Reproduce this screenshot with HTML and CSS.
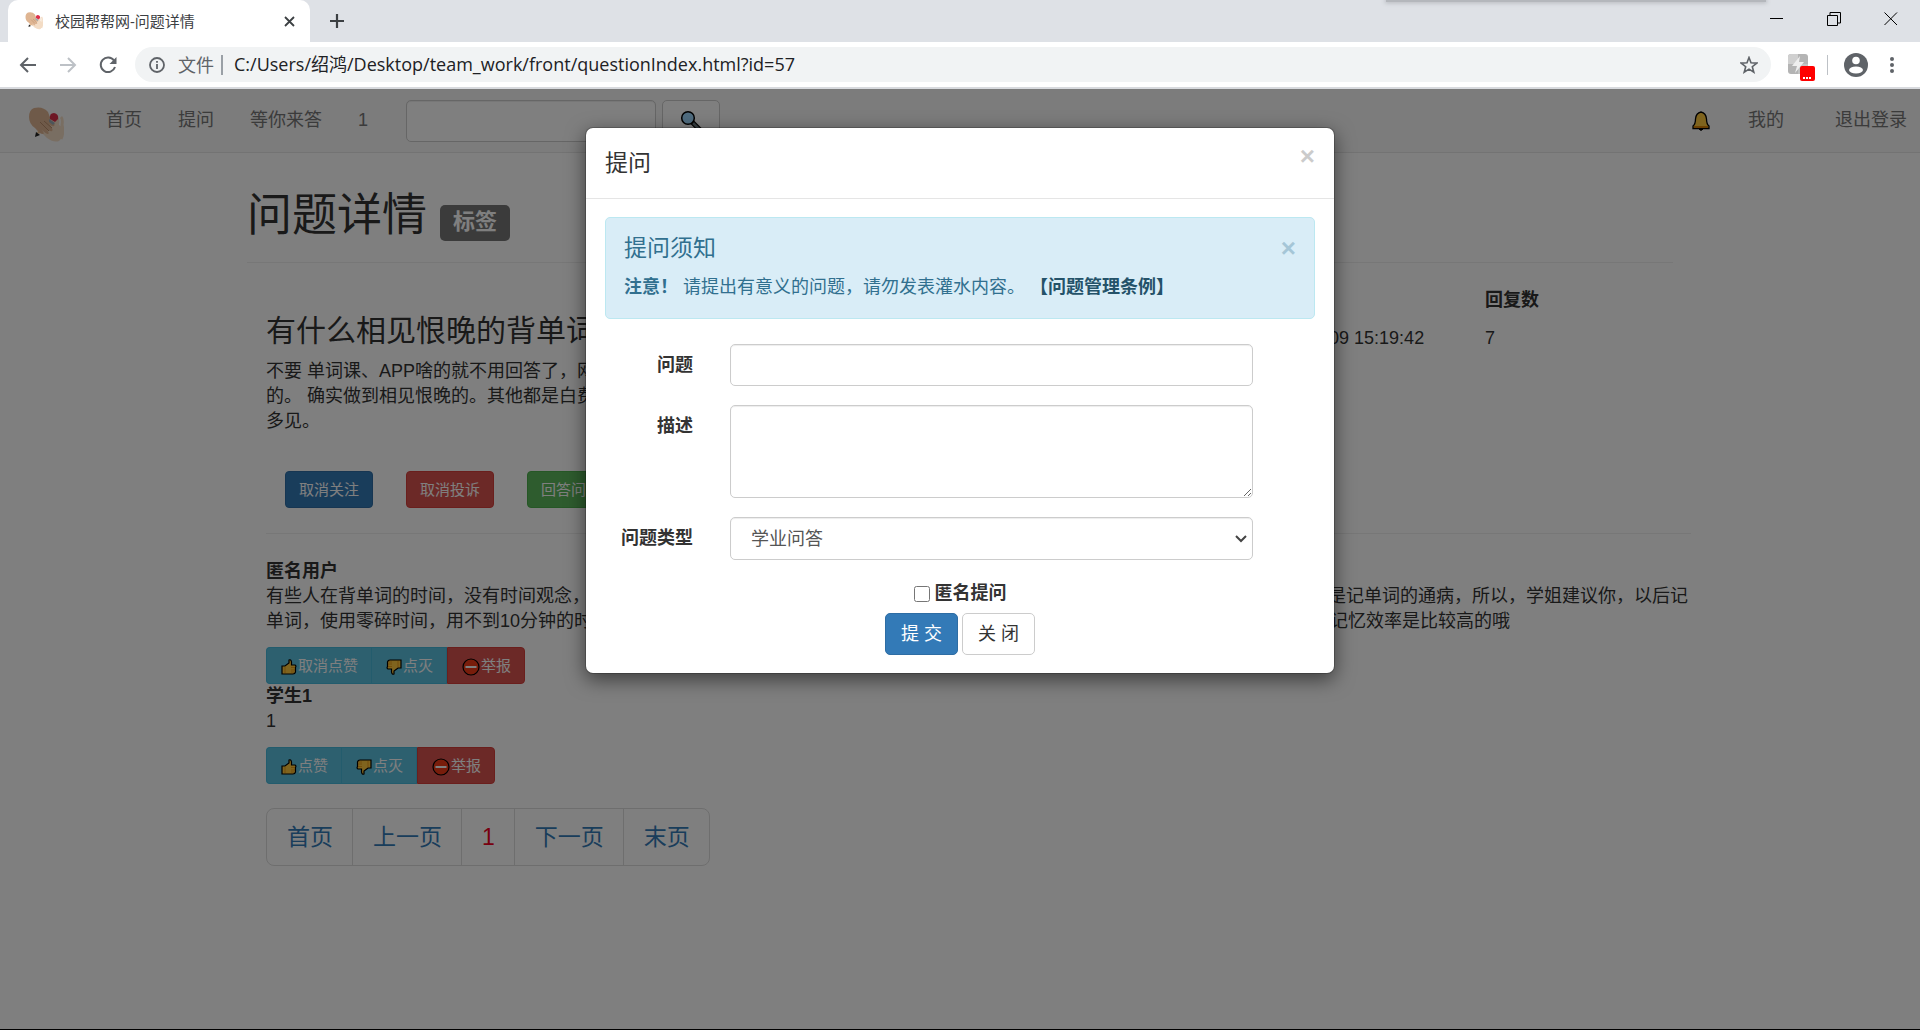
FILE: index.html
```html
<!DOCTYPE html>
<html lang="zh-CN">
<head>
<meta charset="utf-8">
<meta name="viewport" content="width=device-width, initial-scale=1">
<title>校园帮帮网-问题详情</title>
<link rel="stylesheet" href="styles.css">
</head>
<body>
<svg class="sprite" aria-hidden="true">
  <symbol id="logo" viewBox="0 0 36 36">
    <path d="M22 15 L30 10 Q32 11 31 18 L34 20 Q36 30 31 34 Q26 36 19 31 L12 24Z" fill="#f3dcc5"/>
    <path d="M33 10 Q35 12 34 18 Q36 25 33 32" fill="none" stroke="#f3dcc5" stroke-width="3"/>
    <path d="M8 27 L11 23 L14 26Z" fill="#f2c58e"/>
    <path d="M8 25 L12 28 L7 30Z" fill="#222"/>
    <path d="M1 10 Q1 3 6 1 Q15 -1 20 5 L23 13 Q28 17 26 19 Q24 20 21 17 Q26 23 24 24 Q22 25 18 21 Q22 26 20 27 Q18 27 14 23 Q17 27 15 27 Q12 27 7 21 Q1 17 1 10Z" fill="#dfb592"/>
    <path d="M12 15 L21 24 M16 14 L24 21" stroke="#b98d6b" stroke-width="1" fill="none"/>
    <path d="M22 12 Q21 6 26 6 Q31 7 30 12 L27 15Z" fill="#dd2e4a"/>
    <path d="M21 12 L27 16 L25 18 L21 15Z" fill="#99aab5"/>
  </symbol>
  <symbol id="thumb" viewBox="0 0 16 16">
    <path d="M1 7 H4 L8 4 V1 Q10 0 10.500 3 V6 H14 Q15.500 7 14.500 8.500 V13 Q14 15 12 15 H1Z" fill="#ffc83d" stroke="#000" stroke-width="1.2"/>
    <path d="M10 8.500H14 M10 11H14 M10 13H13 M4 8V14" stroke="#d67d00" stroke-width=".6"/>
  </symbol>
  <symbol id="stop" viewBox="0 0 18 18">
    <circle cx="9" cy="9" r="8" fill="#f03a17" stroke="#000" stroke-width="1.2"/>
    <path d="M3.500 9H14.500" stroke="#fff" stroke-width="2"/>
  </symbol>
</svg>
<header class="browser">
  <div class="tabs">
    <div class="tab">
      <svg class="favicon"><use href="#logo"/></svg>
      <span class="tab-title">校园帮帮网-问题详情</span>
      <button class="plain" aria-label="关闭标签页"><svg width="11" height="11" viewBox="0 0 11 11"><path d="M1 1L10 10M10 1L1 10" stroke="#3c4043" stroke-width="1.800"/></svg></button>
    </div>
    <button class="plain newtab" aria-label="新标签页"><svg width="14" height="14" viewBox="0 0 14 14"><path d="M7 0V14M0 7H14" stroke="#3c4043" stroke-width="2.200"/></svg></button>
    <div class="window-buttons">
      <button class="plain" aria-label="最小化"><svg width="14" height="14"><path d="M0 6.500H13" stroke="#000"/></svg></button>
      <button class="plain" aria-label="还原"><svg width="14" height="14"><path d="M.5 3.500H10.500V13.500H.5ZM3 3V.5H13.500V11H11" fill="none" stroke="#000"/></svg></button>
      <button class="plain" aria-label="关闭"><svg width="14" height="14"><path d="M.5 .5L13 13M13 .5L.5 13" stroke="#000"/></svg></button>
    </div>
    <div class="drag-hint"></div>
  </div>
  <div class="toolbar">
    <button class="plain" aria-label="后退"><svg width="18" height="16" viewBox="0 0 18 16"><path d="M17 8H2M9 1L2 8L9 15" fill="none" stroke="#5f6368" stroke-width="2"/></svg></button>
    <button class="plain" aria-label="前进"><svg width="18" height="16" viewBox="0 0 18 16"><path d="M1 8H16M9 1L16 8L9 15" fill="none" stroke="#bdc1c6" stroke-width="2"/></svg></button>
    <button class="plain" aria-label="刷新"><svg width="18" height="18" viewBox="0 0 18 18"><path d="M15 4.500A7.300 7.300 0 1 0 16 11" fill="none" stroke="#5f6368" stroke-width="2"/><path d="M17.500 1V8H10.500Z" fill="#5f6368"/></svg></button>
    <div class="address">
      <svg width="16" height="16" viewBox="0 0 16 16"><circle cx="8" cy="8" r="7" fill="none" stroke="#5f6368" stroke-width="1.800"/><path d="M8 7V12M8 4V5.800" stroke="#5f6368" stroke-width="1.800"/></svg>
      <span class="scheme">文件</span>
      <span class="url">C:/Users/绍鸿/Desktop/team_work/front/questionIndex.html?id=57</span>
      <svg width="18" height="18" viewBox="0 0 18 18"><path d="M9 1.500L11 6.800L16.800 7.100L12.300 10.700L13.800 16.200L9 13.100L4.200 16.200L5.700 10.700L1.200 7.100L7 6.800Z" fill="none" stroke="#5f6368" stroke-width="1.600"/></svg>
    </div>
    <svg class="extension" width="28" height="28" viewBox="0 0 28 28"><rect x="1" y="1" width="20" height="20" rx="3" fill="#b4b4b4"/><path d="M1 4Q1 1 4 1H11V11H1Z" fill="#d0d0d0"/><path d="M11 11H21V18Q21 21 18 21H11Z" fill="#c4c4c4"/><path d="M13 3L5 13H10L8 20L17 9H12Z" fill="#eee"/><rect x="13" y="13" width="15" height="15" rx="2" fill="red"/><path d="M16 25H24" stroke="#fff" stroke-width="2" stroke-dasharray="2 1"/></svg>
    <span class="divider"></span>
    <svg width="24" height="24" viewBox="0 0 24 24"><circle cx="12" cy="12" r="12" fill="#5f6368"/><circle cx="12" cy="7.500" r="3.800" fill="#fff"/><ellipse cx="12" cy="17" rx="7" ry="3.500" fill="#fff"/></svg>
    <button class="plain" aria-label="菜单"><svg width="4" height="18" viewBox="0 0 4 18"><g fill="#5f6368"><circle cx="2" cy="3" r="2"/><circle cx="2" cy="9" r="2"/><circle cx="2" cy="15" r="2"/></g></svg></button>
  </div>
</header>

<div class="page">
  <nav class="navbar">
    <a href="#" class="brand" aria-label="校园帮帮网"><svg width="36" height="36"><use href="#logo"/></svg></a>
    <a href="#">首页</a>
    <a href="#">提问</a>
    <a href="#">等你来答</a>
    <a href="#">1</a>
    <form class="search">
      <input class="control" type="text" aria-label="搜索">
      <button class="btn btn-default" type="button" aria-label="搜索"><svg width="22" height="22" viewBox="0 0 22 22"><path d="M12 12L20 20" stroke="#000" stroke-width="5"/><path d="M13 13L19 19" stroke="#69797e" stroke-width="2.500"/><circle cx="8" cy="8" r="6.300" fill="#9fd8ff" stroke="#000" stroke-width="1.500"/></svg></button>
    </form>
    <div class="nav-right">
      <a href="#" aria-label="通知"><svg width="18" height="20" viewBox="0 0 18 20"><path d="M7 18H11L9 19.500Z" fill="#000" stroke="#000"/><path d="M9 1Q14 2 14.500 8Q14.500 13 17 15V17.500H1V15Q3.500 13 3.500 8Q4 2 9 1Z" fill="#ffc83d" stroke="#000" stroke-width="1.300"/><path d="M2 16H16" stroke="#d67d00" stroke-width="1.800"/></svg></a>
      <a href="#">我的</a>
      <a href="#">退出登录</a>
    </div>
  </nav>

  <main class="container">
    <div class="page-header">
      <h1>问题详情</h1>
      <span class="label">标签</span>
    </div>
    <div class="content">
      <section class="question">
        <div>
          <h3>有什么相见恨晚的背单词方法？</h3>
          <p>不要 单词课、APP啥的就不用回答了，网上一搜一大把<br>的。 确实做到相见恨晚的。其他都是白费时间的方法<br>多见。</p>
          <div class="actions">
            <button class="btn btn-sm btn-primary">取消关注</button>
            <button class="btn btn-sm btn-danger">取消投诉</button>
            <button class="btn btn-sm btn-success">回答问题</button>
          </div>
        </div>
        <table class="stats">
          <thead><tr><th>提问时间</th><th>回复数</th></tr></thead>
          <tbody><tr><td>2020-06-09 15:19:42</td><td>7</td></tr></tbody>
        </table>
      </section>
      <section class="answers">
        <article>
          <b>匿名用户</b>
          <p>有些人在背单词的时间，没有时间观念，总是一背就背很长的时间，背到最后前面背过的都忘了，效率很低，容易产生厌烦情绪，这也是记单词的通病，所以，学姐建议你，以后记单词，使用零碎时间，用不到10分钟的时间来记单词，每次记十个左右，反复多看几遍，晚上睡觉之前再把当天记过的复习一遍，这样记忆效率是比较高的哦</p>
          <div class="btn-group">
            <button class="btn btn-sm btn-info"><svg width="16" height="16"><use href="#thumb"/></svg>取消点赞</button>
            <button class="btn btn-sm btn-info"><svg class="down" width="16" height="16"><use href="#thumb"/></svg>点灭</button>
            <button class="btn btn-sm btn-danger"><svg width="18" height="18"><use href="#stop"/></svg>举报</button>
          </div>
        </article>
        <article>
          <b>学生1</b>
          <p>1</p>
          <div class="btn-group">
            <button class="btn btn-sm btn-info"><svg width="16" height="16"><use href="#thumb"/></svg>点赞</button>
            <button class="btn btn-sm btn-info"><svg class="down" width="16" height="16"><use href="#thumb"/></svg>点灭</button>
            <button class="btn btn-sm btn-danger"><svg width="18" height="18"><use href="#stop"/></svg>举报</button>
          </div>
        </article>
      </section>
      <nav class="pagination" aria-label="分页">
        <a href="#">首页</a><a href="#">上一页</a><a href="#" class="current">1</a><a href="#">下一页</a><a href="#">末页</a>
      </nav>
    </div>
  </main>

  <div class="backdrop">
    <div class="modal" role="dialog" aria-labelledby="ask-title">
      <div class="modal-header">
        <h4 id="ask-title">提问</h4>
        <button class="close" aria-label="关闭">×</button>
      </div>
      <div class="modal-body">
        <div class="alert">
          <div class="alert-head"><h4>提问须知</h4><button class="close" aria-label="关闭">×</button></div>
          <p><strong>注意！</strong> 请提出有意义的问题，请勿发表灌水内容。 <a href="#">【问题管理条例】</a></p>
        </div>
        <form class="ask">
          <label for="q">问题</label>
          <input id="q" class="control" type="text">
          <label for="d">描述</label>
          <textarea id="d" class="control"></textarea>
          <label for="t">问题类型</label>
          <div class="select">
            <select id="t" class="control"><option>学业问答</option></select>
            <svg width="12" height="8" viewBox="0 0 12 8"><path d="M1 1L6 6L11 1" fill="none" stroke="#444" stroke-width="2"/></svg>
          </div>
        </form>
        <div class="check"><input id="anon" type="checkbox"><label for="anon">匿名提问</label></div>
        <div class="submit">
          <button class="btn btn-primary">提 交</button>
          <button class="btn btn-default">关 闭</button>
        </div>
      </div>
    </div>
  </div>
</div>
</body>
</html>
```
FILE: styles.css
```css
* { box-sizing: border-box; }

body {
  margin: 0;
  min-height: 100vh;
  display: flex;
  flex-direction: column;
  font: 18px/25px "Liberation Sans", "Noto Sans CJK SC", sans-serif;
  color: #333;
  background: #fff;
  border-bottom: 1px solid #000;
}

h1, h3, h4, p { margin: 0; font-weight: 400; }
a { color: #337ab7; text-decoration: none; }
button, input, select, textarea { font: inherit; color: inherit; }
svg { flex: none; }
.sprite { position: absolute; width: 0; height: 0; }

.plain {
  display: flex;
  padding: 0;
  border: 0;
  background: none;
}

/* browser window */
.browser {
  font-family: "Open Sans", "Noto Sans CJK SC", sans-serif;
  border-bottom: 2px solid #d8dade;
}

.tabs {
  position: relative;
  display: flex;
  align-items: center;
  height: 42px;
  padding-left: 8px;
  background: #dee1e6;
}

.tab {
  display: flex;
  align-items: center;
  align-self: stretch;
  gap: 12px;
  width: 302px;
  padding: 0 15px 0 17px;
  border-radius: 10px 10px 0 0;
  background: #fff;
}

.favicon { width: 18px; height: 18px; }
.tab-title { flex: 1; font-size: 15px; color: #3c4043; }
.newtab { margin-left: 20px; }

.window-buttons {
  display: flex;
  gap: 43px;
  margin-left: auto;
  padding: 0 22px 5px 0;
}

.drag-hint {
  position: absolute;
  top: 0;
  right: 154px;
  width: 380px;
  height: 2px;
  background: #b4b7bc;
  box-shadow: 0 0 4px 1px #b4b7bc;
}

.toolbar {
  display: flex;
  align-items: center;
  gap: 22px;
  height: 45px;
  padding: 0 26px 0 19px;
}

.address {
  display: flex;
  flex: 1;
  align-items: center;
  height: 35px;
  margin: 0 -6px 0 -4px;
  padding: 0 13px 0 14px;
  border-radius: 18px;
  background: #f1f3f4;
}

.scheme {
  margin: 0 10px 0 20px;
  margin: 0 11px 0 13px;
  padding-right: 7px;
  line-height: 20px;
  color: #5f6368;
  border-right: 2px solid #9aa0a6;
}

.url { flex: 1; color: #202124; }
.extension { margin: 4px -10px 0 0; }
.divider { width: 1px; height: 20px; background: #bdc1c6; margin-right: -6px; }

/* page */
.page { position: relative; flex: 1; }

.navbar {
  display: flex;
  align-items: center;
  gap: 36px;
  height: 64px;
  padding: 0 13px 0 28px;
  background: #f8f8f8;
  border-bottom: 1px solid #e7e7e7;
}

.navbar a { color: #777; }
.brand { display: flex; margin: 8px 6px 0 0; }
.search { display: flex; gap: 6px; margin-left: 2px; }
.search .control { width: 250px; }
.search .btn { padding: 0 17px; }

.nav-right {
  display: flex;
  align-items: center;
  gap: 51px;
  margin-left: auto;
}

.nav-right a:first-child { display: flex; margin-right: -13px; }

.container {
  max-width: 1462px;
  margin: 0 auto;
  padding: 0 18px;
}

.page-header {
  display: flex;
  align-items: flex-end;
  gap: 13px;
  padding: 37px 0 21px;
  border-bottom: 1px solid #eee;
}

h1 { font-size: 45px; line-height: 51px; }

.label {
  padding: 4px 13px 6px;
  border-radius: 5px;
  font-size: 22px;
  line-height: 26px;
  font-weight: 700;
  color: #fff;
  background: #777;
}

.content { margin: 0 -18px 0 19px; }

.question {
  display: grid;
  grid-template-columns: 1fr 434px;
  align-items: start;
  padding: 15px 0 25px;
  border-bottom: 1px solid #eee;
}

h3 {
  padding: 36px 0 12px;
  font-size: 30px;
  line-height: 33px;
}

.actions {
  display: flex;
  gap: 33px;
  padding: 37px 19px 0;
}

.stats { width: 100%; border-spacing: 0; table-layout: fixed; }
.stats th, .stats td { padding: 10px 0 3px; text-align: left; }
.stats th:first-child { width: 228px; }

.answers { padding-top: 25px; }
.answers p { margin-bottom: 13px; }

.btn {
  display: inline-flex;
  align-items: center;
  justify-content: center;
  height: 42px;
  padding: 0 15px;
  border: 1px solid;
  border-radius: 5px;
}

.btn-sm {
  height: 37px;
  padding: 0 13px;
  font-size: 15px;
  border-radius: 4px;
  color: #fff;
}

.btn-default { color: #333; background: #fff; border-color: #ccc; }
.btn-primary { color: #fff; background: #337ab7; border-color: #2e6da4; }
.btn-danger { background: #d9534f; border-color: #d43f3a; }
.btn-success { background: #5cb85c; border-color: #4cae4c; }
.btn-info { background: #5bc0de; border-color: #46b8da; }

.btn-group { display: flex; }
.btn-group .btn { padding: 0 13px 0 14px; border-radius: 0; }
.btn-group .btn:first-child { border-right: 0; border-radius: 4px 0 0 4px; }
.btn-group .btn:last-child { border-radius: 0 4px 4px 0; }
.btn-group svg { margin: 2px 1px 0 0; }
.down { transform: rotate(180deg); }

.pagination {
  display: inline-flex;
  margin-top: 24px;
  border: 1px solid #ddd;
  border-radius: 8px;
  font-size: 23px;
}

.pagination a {
  padding: 12px 19px 12px 20px;
  line-height: 32px;
  border-right: 1px solid #ddd;
}

.pagination a:last-child { border-right: 0; }
.pagination .current { color: #f00020; }

/* dialog */
.backdrop {
  position: absolute;
  inset: 0;
  padding: 38px 20px;
  background: rgba(0, 0, 0, .5);
}

.modal {
  max-width: 750px;
  margin: 0 auto;
  border: 1px solid rgba(0, 0, 0, .2);
  border-radius: 8px;
  background: #fff;
  background-clip: padding-box;
  box-shadow: 0 6px 19px rgba(0, 0, 0, .5);
}

.modal-header {
  display: flex;
  justify-content: space-between;
  align-items: flex-start;
  padding: 18px 19px;
  border-bottom: 1px solid #e5e5e5;
}

h4 { font-size: 23px; line-height: 34px; }

.close {
  padding: 0;
  border: 0;
  background: none;
  font-size: 26px;
  line-height: 20px;
  font-weight: 700;
  color: #000;
  opacity: .2;
}

.alert .close { color: #31708f; opacity: .3; }

.modal-body { padding: 18px 19px; }

.alert {
  padding: 13px 18px 18px;
  border: 1px solid #bce8f1;
  border-radius: 5px;
  color: #31708f;
  background: #d9edf7;
}

.alert-head {
  display: flex;
  align-items: center;
  justify-content: space-between;
  margin-bottom: 10px;
}

.alert a { font-weight: 700; color: #245269; }

.ask {
  display: grid;
  grid-template-columns: 88px 1fr;
  gap: 19px 37px;
  padding: 25px 62px 0 0;
}

.ask label { padding-top: 9px; text-align: right; white-space: nowrap; }
label { font-weight: 700; }

.control {
  display: block;
  width: 100%;
  height: 42px;
  padding: 7px 15px;
  color: #555;
  background: #fff;
  border: 1px solid #ccc;
  border-radius: 5px;
  box-shadow: inset 0 1px 1px rgba(0, 0, 0, .075);
}

textarea.control { height: 93px; }
.select { position: relative; }
.select .control { height: 43px; appearance: none; padding: 1px 20px 0; }
.select svg { position: absolute; right: 6px; top: 18px; }

.check {
  display: flex;
  align-items: center;
  justify-content: center;
  gap: 5px;
  padding: 21px 0 7px;
}

.check input { width: 16px; height: 16px; margin: 0; }
.submit { display: flex; justify-content: center; gap: 4px; }
```
